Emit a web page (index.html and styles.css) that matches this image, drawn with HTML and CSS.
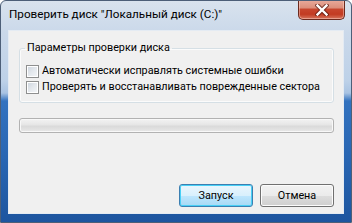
FILE: index.html
```html
<!DOCTYPE html>
<html lang="ru">
<head>
<meta charset="utf-8">
<title>Проверить диск</title>
<link rel="stylesheet" href="styles.css">
</head>
<body>
<div class="window">
  <div class="titlebar">
    <span class="title">Проверить диск "Локальный диск (C:)"</span>
    <button class="close" aria-label="Закрыть">
      <svg width="14" height="12" viewBox="0 0 14 12">
        <path d="M2.5 1.5 L11.5 10.5 M11.5 1.5 L2.5 10.5" stroke="#5a1a10" stroke-width="4.4" stroke-linecap="square" fill="none" opacity="0.75"/>
        <path d="M2.5 1.5 L11.5 10.5 M11.5 1.5 L2.5 10.5" stroke="#ffffff" stroke-width="2.4" stroke-linecap="square" fill="none"/>
      </svg>
    </button>
  </div>
  <div class="client">
    <fieldset class="group">
      <legend class="group-label">Параметры проверки диска</legend>
      <label class="check"><span class="box"></span>Автоматически исправлять системные ошибки</label>
      <label class="check"><span class="box"></span>Проверять и восстанавливать поврежденные сектора</label>
    </fieldset>
    <div class="progress"></div>
    <div class="buttons">
      <button class="btn btn-default">Запуск</button>
      <button class="btn">Отмена</button>
    </div>
  </div>
</div>
</body>
</html>
```

FILE: styles.css
```css
html, body {
  margin: 0;
  padding: 0;
  background: #ffffff;
}

body {
  font-family: Roboto, "Noto Sans", sans-serif;
  font-size: 10.8px;
  color: #000;
  white-space: nowrap;
}

.window {
  width: 352px;
  height: 223px;
  box-sizing: border-box;
  display: flex;
  flex-direction: column;
  border: 1px solid #4d5f78;
  border-radius: 6px 6px 0 0;
  background: linear-gradient(180deg,
    #d9e3ee 0px,
    #cbd9ea 30px,
    #bdd1e8 80px,
    #a9c3e2 92px,
    #3372bf 100px,
    #2865b2 160px,
    #1d559f 222px);
  overflow: hidden;
}

.titlebar {
  height: 29px;
  display: flex;
  align-items: flex-start;
  flex: none;
}

.title {
  padding: 5px 0 0 8px;
  line-height: 17px;
  font-size: 11.7px;
  color: #000;
}

.close {
  margin-left: auto;
  margin-right: 6px;
  margin-top: -1px;
  width: 47px;
  height: 20px;
  padding: 0;
  border: 1px solid #6b2a1e;
  border-top: none;
  border-radius: 0 0 5px 5px;
  background: linear-gradient(180deg,
    #e9ab9c 0%,
    #dc8f7c 40%,
    #c7452d 50%,
    #c23b22 75%,
    #d6745c 100%);
  box-shadow: inset 0 0 0 1px rgba(255, 220, 210, 0.45);
  display: flex;
  align-items: center;
  justify-content: center;
}

.close svg {
  display: block;
  margin-top: 1px;
}

.client {
  flex: 1;
  margin: 0 7px 8px 7px;
  background: #f0f0f0;
  border: 1px solid #e4ebf3;
  display: flex;
  flex-direction: column;
  padding: 0 9px 6px 10px;
}

.group {
  margin: 9px 0 0 0;
  padding: 7px 0 7px 6px;
  border: 1px solid #d5dfe5;
  border-radius: 3px;
  box-shadow: inset 0 0 0 1px #fbfbfb;
  min-width: 0;
}

.group-label {
  margin-left: -1px;
  padding: 0 2px;
  line-height: 16px;
}

.check {
  display: flex;
  align-items: center;
  height: 16px;
  line-height: 16px;
}

.box {
  width: 11px;
  height: 11px;
  border: 1px solid #8e8f8f;
  margin-right: 3px;
  flex: none;
  background: linear-gradient(135deg, #cbd3dc 0%, #e4e8ed 50%, #f4f6f8 100%);
  box-shadow: inset 0 0 0 1px #ffffff;
}

.progress {
  margin-top: 15px;
  height: 15px;
  box-sizing: border-box;
  border: 1px solid #b2b2b2;
  border-radius: 3px;
  background: linear-gradient(180deg, #f3f3f3 0%, #e6e6e6 45%, #dadada 55%, #e8e8e8 100%);
  box-shadow: inset 0 0 0 1px #f8f8f8;
}

.buttons {
  margin-top: auto;
  display: flex;
  justify-content: flex-end;
  gap: 7px;
}

.btn {
  width: 74px;
  height: 23px;
  padding: 0;
  font-family: inherit;
  font-size: 10.8px;
  color: #000;
  border: 1px solid #707070;
  border-radius: 3px;
  background: linear-gradient(180deg, #f2f2f2 0%, #ebebeb 50%, #dddddd 51%, #cfcfcf 100%);
  box-shadow: inset 0 0 0 1px #fcfcfc;
}

.btn-default {
  border-color: #3c7fb1;
  background: linear-gradient(180deg, #eaf6fd 0%, #d9f0fc 50%, #bee6fd 51%, #a7d9f5 100%);
  box-shadow: inset 0 0 0 1px #48d0f6;
}
```
